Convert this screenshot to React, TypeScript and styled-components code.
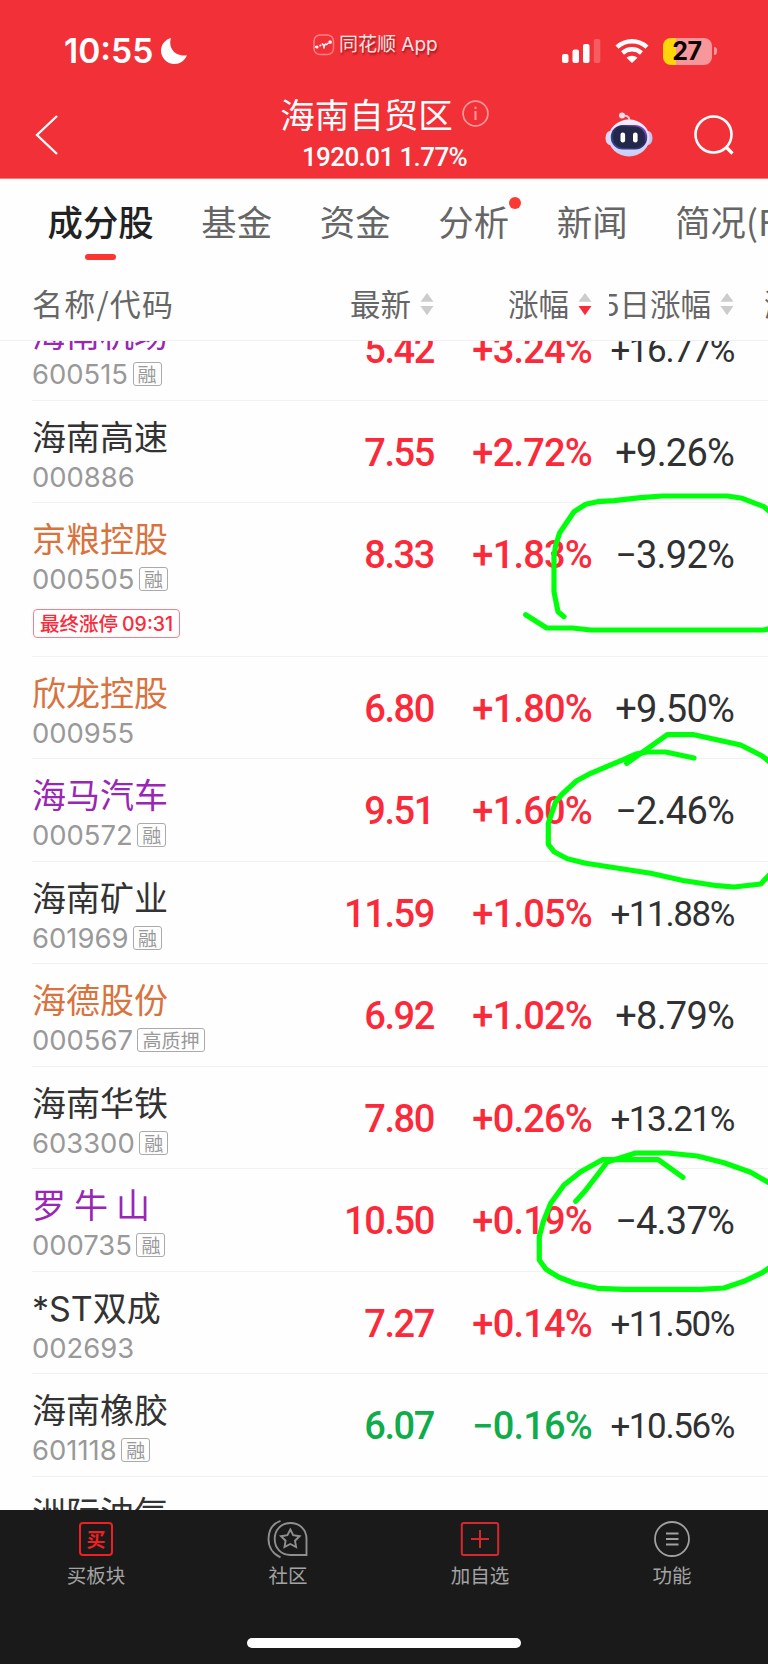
import React from 'react';
import styled, { createGlobalStyle } from 'styled-components';

const cjk = `"Noto Sans CJK SC", sans-serif`;
const ui = `Inter, ${cjk}`;
const digits = `Roboto, ${cjk}`;

const GlobalStyle = createGlobalStyle`
  html, body { margin: 0; padding: 0; background: #fff; }
  * { box-sizing: border-box; }
`;

const Screen = styled.div`
  position: relative;
  display: flex;
  flex-direction: column;
  width: 768px;
  height: 1664px;
  overflow: hidden;
  background: #fefefe;
  font-family: ${ui};
`;

/* ---------- header ---------- */

const Header = styled.header`
  flex: none;
  height: 179px;
  background: #f23037;
  color: #fff;
  border-bottom: 1px solid #f5787c;
`;

const StatusBar = styled.div`
  display: flex;
  align-items: center;
  height: 80px;
  padding: 22px 51px 0 64px;
`;

const Clock = styled.span`
  width: 97px;
  font-size: 33.6px;
  line-height: 40px;
  font-weight: 600;
  white-space: nowrap;
`;

const AppMark = styled.div`
  display: flex;
  align-items: center;
  gap: 4px;
  width: 128px;
  margin: -13px 0 0 126px;
  font-size: 19px;
  line-height: 28px;
  white-space: nowrap;
  color: #fde3e4;
  text-shadow: 1px 2px 2px rgba(90, 0, 0, 0.55);
`;

const Indicators = styled.div`
  display: flex;
  align-items: center;
  gap: 14px;
  margin-left: auto;
`;

const Battery = styled.div`
  display: flex;
  align-items: center;
  gap: 2px;
`;

const BatteryBody = styled.div`
  display: flex;
  align-items: center;
  justify-content: center;
  width: 49px;
  height: 27px;
  padding-right: 1px;
  border-radius: 8px;
  background: linear-gradient(90deg, #ffd60a 0 13px, #f8979b 13px);
  color: #0a0000;
  font-size: 25px;
  line-height: 27px;
  font-weight: 700;
  letter-spacing: -0.5px;
`;

const BatteryTip = styled.div`
  width: 3px;
  height: 8px;
  border-radius: 0 3px 3px 0;
  background: #f8979b;
`;

const NavBar = styled.div`
  display: grid;
  grid-template-columns: 200px 1fr 200px;
  height: 98px;
  padding: 0 33px 0 34px;
`;

const NavSide = styled.div<{ $end?: boolean }>`
  display: flex;
  align-items: center;
  justify-content: ${(p) => (p.$end ? 'flex-end' : 'flex-start')};
  gap: 40px;
  padding-top: 12px;
`;

const Titles = styled.div`
  display: flex;
  flex-direction: column;
  align-items: center;
`;

const Title = styled.h1`
  display: flex;
  align-items: center;
  gap: 9px;
  height: 40px;
  margin: 13px 0 0;
  font: 400 34.5px/40px ${cjk};
  white-space: nowrap;
`;

const TitleText = styled.span`
  padding-bottom: 1px;
`;

const IndexLine = styled.div`
  margin-top: 9px;
  font: 500 26px/30px ${digits};
  letter-spacing: -0.6px;
  white-space: nowrap;
`;

/* ---------- tabs ---------- */

const Tabs = styled.nav`
  display: flex;
  flex: none;
  gap: 47.7px;
  height: 88px;
  padding: 17px 0 0 47.500px;
`;

const Tab = styled.div<{ $active?: boolean }>`
  position: relative;
  display: flex;
  flex: none;
  flex-direction: column;
  align-items: center;
  font-size: 35.4px;
  line-height: 50px;
  font-family: ${cjk};
  font-weight: ${(p) => (p.$active ? 500 : 400)};
  color: ${(p) => (p.$active ? '#222' : '#666')};
  white-space: nowrap;
`;

const Underline = styled.i`
  width: 31px;
  height: 6px;
  margin-top: 8px;
  border-radius: 3px;
  background: #fb352f;
`;

const Dot = styled.i`
  position: absolute;
  top: 0.500px;
  right: -12px;
  width: 12px;
  height: 12px;
  border-radius: 50%;
  background: #fb3b33;
`;

/* ---------- table ---------- */

const columns = '250px 152px 158px 142px auto';

const TableHead = styled.div`
  display: grid;
  flex: none;
  grid-template-columns: ${columns};
  align-items: center;
  height: 74px;
  padding-left: 32px;
  border-bottom: 1px solid #f0f0f0;
  font: 400 30.5px/44px ${cjk};
  color: #666;
  white-space: nowrap;
`;

const HeadCell = styled.div<{ $clipped?: boolean }>`
  display: flex;
  align-items: center;
  justify-content: flex-end;
  gap: 9px;
  margin-left: ${(p) => (p.$clipped ? '17px' : '0')};
  overflow: hidden;

  svg {
    flex: none;
  }
`;

const HeadLabel = styled.span`
  flex: none;
  padding-bottom: 2px;
`;

const HeadName = styled.div`
  padding-bottom: 2px;
  font-size: 31px;
  letter-spacing: 1.2px;
`;

const NextHead = styled.div`
  padding: 0 0 2px 30px;
  overflow: hidden;
`;

const List = styled.main`
  flex: none;
  height: 1169px;
  overflow: hidden;
`;

const Rows = styled.div`
  margin-top: -43px;
  padding-left: 32px;
`;

const Row = styled.div<{ $tall?: boolean }>`
  display: grid;
  grid-template-columns: ${columns};
  height: ${(p) => (p.$tall ? '153.6px' : '102.53px')};
  border-bottom: 1px solid #f1f1f1;
  white-space: nowrap;
`;

const tones = { up: '#fb2a3a', down: '#0fac4c', ink: '#303133' };
type Tone = keyof typeof tones;
const nameTones = { ink: '#333', orange: '#d8733e', purple: '#9a26b4' };
type NameTone = keyof typeof nameTones;

const Name = styled.div<{ $tone: NameTone }>`
  height: 44px;
  margin-top: 15px;
  font: 400 34px/44px ${ui};
  word-spacing: -1.6px;
  color: ${(p) => nameTones[p.$tone]};
`;

const Code = styled.div`
  display: flex;
  align-items: center;
  gap: 4.500px;
  height: 34px;
  font-size: 27.4px;
  line-height: 34px;
  color: #999;
`;

const Tag = styled.span`
  height: 24px;
  padding: 0 4px;
  border: 1px solid #aaa;
  border-radius: 3px;
  font: 400 19px/21px ${cjk};
  color: #999;
`;

const LimitTag = styled.div`
  display: flex;
  align-items: center;
  gap: 4px;
  width: max-content;
  height: 29px;
  margin-top: 13px;
  margin-left: 1px;
  padding: 0 6px;
  border: 1px solid #fa7d87;
  border-radius: 4px;
  font-size: 19.5px;
  line-height: 26px;
  font-weight: 500;
  color: #fb2a3a;
`;

const Figure = styled.div<{ $tone: Tone; $small?: boolean; $tight?: boolean }>`
  padding-top: ${(p) => (p.$small ? 30 : 29)}px;
  text-align: right;
  font-family: ${digits};
  font-weight: ${(p) => (p.$tone === 'ink' ? 450 : 500)};
  font-size: ${(p) => (p.$small ? 35 : 38)}px;
  line-height: 46px;
  letter-spacing: ${(p) => (p.$small || p.$tight ? '-1.4px' : '-0.8px')};
  color: ${(p) => tones[p.$tone]};
`;

/* ---------- bottom bar ---------- */

const Footer = styled.footer`
  display: flex;
  flex: 1;
  flex-direction: column;
  align-items: center;
  background: #1a1a1a;
`;

const Actions = styled.div`
  display: grid;
  grid-template-columns: repeat(4, 1fr);
  width: 100%;
  height: 128px;
  padding-top: 9px;
`;

const Action = styled.div`
  display: flex;
  flex-direction: column;
  align-items: center;
  gap: 2px;
  font: 400 19.5px/28px ${cjk};
  color: #a3a3a3;
`;

const BuyGlyph = styled.div`
  width: 34px;
  height: 34px;
  margin: 3px 0;
  border: 2px solid #ee2022;
  border-radius: 4px;
  text-align: center;
  font: 700 19px/29px ${cjk};
  color: #ee2022;
`;

const HomeIndicator = styled.div`
  width: 274px;
  height: 10px;
  border-radius: 5px;
  background: #fff;
`;

const Marks = styled.svg`
  position: absolute;
  inset: 0;
  pointer-events: none;
`;

/* ---------- icons ---------- */

const Moon = () => (
  <svg width="26" height="26" viewBox="0 0 26 26">
    <path d="M10 0C7 9 13 19 26 17.300C23.500 23 19 26 13.500 26C6 26 0 20 0 12.800C0 7 4 1.500 10 0Z" fill="#fff" />
  </svg>
);

const AppLogo = () => (
  <svg width="22" height="22" viewBox="0 0 22 22" fill="none">
    <rect x="1" y="1" width="19.500" height="19.500" rx="6" stroke="#f98085" strokeWidth="1.500" />
    <path d="M2 12.500L5 13.500M6.500 12L8 11M13 11L15.500 9" stroke="#fff" strokeWidth="1.600" />
    <path d="M9 9.500L11 12L13 9.500M11 12V14.500" stroke="#fff" strokeWidth="1.600" />
    <rect x="15.500" y="6.500" width="3.200" height="3.200" rx="1" fill="#fff" />
    <circle cx="4" cy="13" r="1.500" fill="#fff" />
  </svg>
);

const Signal = () => (
  <svg width="39" height="26" viewBox="0 0 39 26" fill="#fff">
    <rect x="0" y="16" width="6.500" height="9" rx="2" />
    <rect x="10.500" y="11.500" width="6.500" height="13.500" rx="2" />
    <rect x="21" y="6" width="6.500" height="19" rx="2" />
    <rect x="31.800" y="1" width="6.500" height="24" rx="2" opacity=".22" />
  </svg>
);

const Wifi = () => (
  <svg width="34" height="26" viewBox="0 0 34 26" fill="none" stroke="#fff" strokeWidth="4.400">
    <path d="M2 9.200C10.500 1.200 23.500 1.200 32 9.200" />
    <path d="M7.500 15C13 10 21 10 26.500 15" />
    <path d="M17 25L11.500 19.700C14.500 17 19.500 17 22.500 19.700Z" fill="#fff" stroke="none" />
  </svg>
);

const Back = () => (
  <svg width="26" height="42" viewBox="0 0 26 42" fill="none" stroke="#fff" strokeWidth="2.300">
    <path d="M23 2L3 21L23 40" />
  </svg>
);

const Info = () => (
  <svg width="27" height="27" viewBox="0 0 27 27" fill="none" stroke="#fa9b9e" strokeWidth="1.700">
    <circle cx="13.500" cy="13.500" r="12.400" />
    <path d="M13.500 11V20M13.500 6.800V9" strokeWidth="2" />
  </svg>
);

const Robot = () => (
  <svg width="48" height="46" viewBox="0 0 48 46">
    <defs>
      <linearGradient id="shell" x1="0" y1="0" x2="0" y2="1">
        <stop offset="0" stopColor="#f4efff" />
        <stop offset="1" stopColor="#c9cdf6" />
      </linearGradient>
      <linearGradient id="rim" x1="0" y1="1" x2="1" y2="0">
        <stop offset="0" stopColor="#35489e" />
        <stop offset=".6" stopColor="#2a2a68" />
        <stop offset="1" stopColor="#a855e8" />
      </linearGradient>
    </defs>
    <path d="M17 3.500C21 3 24 4 24.500 8" stroke="#f3c5d8" strokeWidth="2" fill="none" />
    <circle cx="17" cy="3.500" r="3" fill="#f5dce8" />
    <ellipse cx="5" cy="26" rx="4.500" ry="7" fill="#dcd7f5" />
    <ellipse cx="43" cy="26" rx="4.500" ry="7" fill="#c9c5ee" />
    <ellipse cx="24" cy="26" rx="20.500" ry="18.500" fill="url(#shell)" />
    <rect x="5.800" y="13" width="36.400" height="24.400" rx="12" fill="url(#rim)" />
    <rect x="8" y="14.500" width="32" height="21.500" rx="10" fill="#232849" />
    <rect x="15.500" y="20.500" width="4.600" height="10" rx="2.200" fill="#fff" />
    <rect x="28" y="20.500" width="4.600" height="10" rx="2.200" fill="#fff" />
  </svg>
);

const Search = () => (
  <svg width="42" height="42" viewBox="0 0 42 42" fill="none" stroke="#fff" strokeWidth="2.600">
    <circle cx="20.500" cy="20.500" r="18" />
    <path d="M33 33L39.500 39.500" strokeWidth="3.200" />
  </svg>
);

const Sort = ({ active }: { active?: boolean }) => (
  <svg width="14" height="24" viewBox="0 0 14 24">
    <path d="M7 1L13.500 9.800H0.500Z" fill="#ccc" />
    <path d="M7 23.200L0.500 14H13.500Z" fill={active ? '#fb2a3a' : '#ccc'} />
  </svg>
);

const Community = () => (
  <svg width="42" height="40" viewBox="0 0 42 40" fill="none" stroke="#8f8f8f" strokeWidth="1.900">
    <path d="M23.500 4C33 4 39.500 11 39.500 20V36H23.500C14 36 7.700 29 7.700 20C7.700 11 14 4 23.500 4Z" />
    <path d="M13.500 1.800C5 5 1.500 12 1.500 20C1.500 28 6 35 13.500 38.300" />
    <path d="M23.300 10.500L26.200 16.200L32.600 17.200L28 21.700L29.100 28L23.300 25L17.500 28L18.600 21.700L14 17.200L20.400 16.200Z" />
  </svg>
);

const Add = () => (
  <svg width="40" height="40" viewBox="0 0 40 40" fill="none" stroke="#d6282c" strokeWidth="2">
    <rect x="1.800" y="4" width="36.400" height="32" rx="2" />
    <path d="M11 20H29M20 11V29" />
  </svg>
);

const Menu = () => (
  <svg width="40" height="40" viewBox="0 0 40 40" fill="none" stroke="#a0a0a0" strokeWidth="1.800">
    <circle cx="20" cy="20" r="17" />
    <path d="M14 14.500H26.500M14 20H26.500M14 25.500H26.500" strokeWidth="2.200" />
  </svg>
);

/* ---------- data ---------- */

interface Stock {
  name: string;
  tone: NameTone;
  code: string;
  tag?: string;
  limit?: string;
  price: string;
  change: string;
  five: string;
}

const stocks: Stock[] = [
  { name: '海南机场', tone: 'purple', code: '600515', tag: '融', price: '5.42', change: '+3.24%', five: '+16.77%' },
  { name: '海南高速', tone: 'ink', code: '000886', price: '7.55', change: '+2.72%', five: '+9.26%' },
  { name: '京粮控股', tone: 'orange', code: '000505', tag: '融', limit: '09:31', price: '8.33', change: '+1.83%', five: '−3.92%' },
  { name: '欣龙控股', tone: 'orange', code: '000955', price: '6.80', change: '+1.80%', five: '+9.50%' },
  { name: '海马汽车', tone: 'purple', code: '000572', tag: '融', price: '9.51', change: '+1.60%', five: '−2.46%' },
  { name: '海南矿业', tone: 'ink', code: '601969', tag: '融', price: '11.59', change: '+1.05%', five: '+11.88%' },
  { name: '海德股份', tone: 'orange', code: '000567', tag: '高质押', price: '6.92', change: '+1.02%', five: '+8.79%' },
  { name: '海南华铁', tone: 'ink', code: '603300', tag: '融', price: '7.80', change: '+0.26%', five: '+13.21%' },
  { name: '罗 牛 山', tone: 'purple', code: '000735', tag: '融', price: '10.50', change: '+0.19%', five: '−4.37%' },
  { name: '*ST双成', tone: 'ink', code: '002693', price: '7.27', change: '+0.14%', five: '+11.50%' },
  { name: '海南橡胶', tone: 'ink', code: '601118', tag: '融', price: '6.07', change: '−0.16%', five: '+10.56%' },
];

const StockRow = ({ s }: { s: Stock }) => {
  const tone: Tone = s.change.startsWith('−') ? 'down' : 'up';
  return (
    <Row $tall={!!s.limit}>
      <div>
        <Name $tone={s.tone}>{s.name}</Name>
        <Code>
          {s.code}
          {s.tag && <Tag>{s.tag}</Tag>}
        </Code>
        {s.limit && (
          <LimitTag>
            <span>最终涨停</span>
            <span>{s.limit}</span>
          </LimitTag>
        )}
      </div>
      <Figure $tone={tone} $tight>{s.price}</Figure>
      <Figure $tone={tone}>{s.change}</Figure>
      <Figure $tone="ink" $small={s.five.length > 6}>{s.five}</Figure>
    </Row>
  );
};

export default function App() {
  return (
    <Screen>
      <GlobalStyle />
      <Header>
        <StatusBar>
          <Clock>10:55</Clock>
          <Moon />
          <AppMark>
            <AppLogo />
            <span>同花顺 App</span>
          </AppMark>
          <Indicators>
            <Signal />
            <Wifi />
            <Battery>
              <BatteryBody>27</BatteryBody>
              <BatteryTip />
            </Battery>
          </Indicators>
        </StatusBar>
        <NavBar>
          <NavSide>
            <Back />
          </NavSide>
          <Titles>
            <Title>
              <TitleText>海南自贸区</TitleText>
              <Info />
            </Title>
            <IndexLine>1920.01 1.77%</IndexLine>
          </Titles>
          <NavSide $end>
            <Robot />
            <Search />
          </NavSide>
        </NavBar>
      </Header>

      <Tabs>
        <Tab $active>
          成分股
          <Underline />
        </Tab>
        <Tab>基金</Tab>
        <Tab>资金</Tab>
        <Tab>
          分析
          <Dot />
        </Tab>
        <Tab>新闻</Tab>
        <Tab>简况(F10)</Tab>
      </Tabs>

      <TableHead>
        <HeadName>名称/代码</HeadName>
        <HeadCell>
          <HeadLabel>最新</HeadLabel>
          <Sort />
        </HeadCell>
        <HeadCell>
          <HeadLabel>涨幅</HeadLabel>
          <Sort active />
        </HeadCell>
        <HeadCell $clipped>
          <HeadLabel>5日涨幅</HeadLabel>
          <Sort />
        </HeadCell>
        <NextHead>涨</NextHead>
      </TableHead>

      <List>
        <Rows>
          {stocks.map((s) => (
            <StockRow key={s.code} s={s} />
          ))}
          <Name $tone="ink">洲际油气</Name>
        </Rows>
      </List>

      <Footer>
        <Actions>
          <Action>
            <BuyGlyph>买</BuyGlyph>
            买板块
          </Action>
          <Action>
            <Community />
            社区
          </Action>
          <Action>
            <Add />
            加自选
          </Action>
          <Action>
            <Menu />
            功能
          </Action>
        </Actions>
        <HomeIndicator />
      </Footer>

      <Marks width="768" height="1664" viewBox="0 0 768 1664" fill="none" stroke="#00ff0a" strokeWidth="5.200" strokeLinecap="round" strokeLinejoin="round">
        <path d="M564 616.700L558 611.700L554 591.700V556.700L555.700 545L559.700 532.700L574 511.700L585.700 504.300L597.300 501.700L614 500.700L640.700 497.700L662.300 496H727.300L742.300 498.300L764 506.700L772 514" />
        <path d="M525.700 614.700L546.700 628H572.300L590.700 630H764L772 628" />
        <path d="M694 758L665.700 752H647.300L635.700 754L624 759.300L590.700 773.300L576.700 780.700L562.300 794L555.700 801.700L548.300 823.300V844.300L554 851.700L567.300 858.700L585.700 863.300L650.700 873.300L683 880.500L717.300 885.700L734 887L760.700 884L772 872" />
        <path d="M626.700 763.300L667.300 734.700H694L740.700 745L762.300 756L772 764" />
        <path d="M683 1177.300L658.300 1159.700H602.300L580.700 1171.700L564 1185L550.700 1203.300L543.300 1221.700L539.300 1236.700V1260L546 1269.300L559 1277.300L574.700 1283.300L597.300 1288.300L624 1289.300H700.700L724 1288L744 1281.300L762.300 1272.700L772 1266" />
        <path d="M575.700 1201.300L584 1192.300L607.300 1162L635.700 1153H667.300L697.300 1156L724 1162.700L750.700 1172.300L772 1184.500" />
      </Marks>
    </Screen>
  );
}
